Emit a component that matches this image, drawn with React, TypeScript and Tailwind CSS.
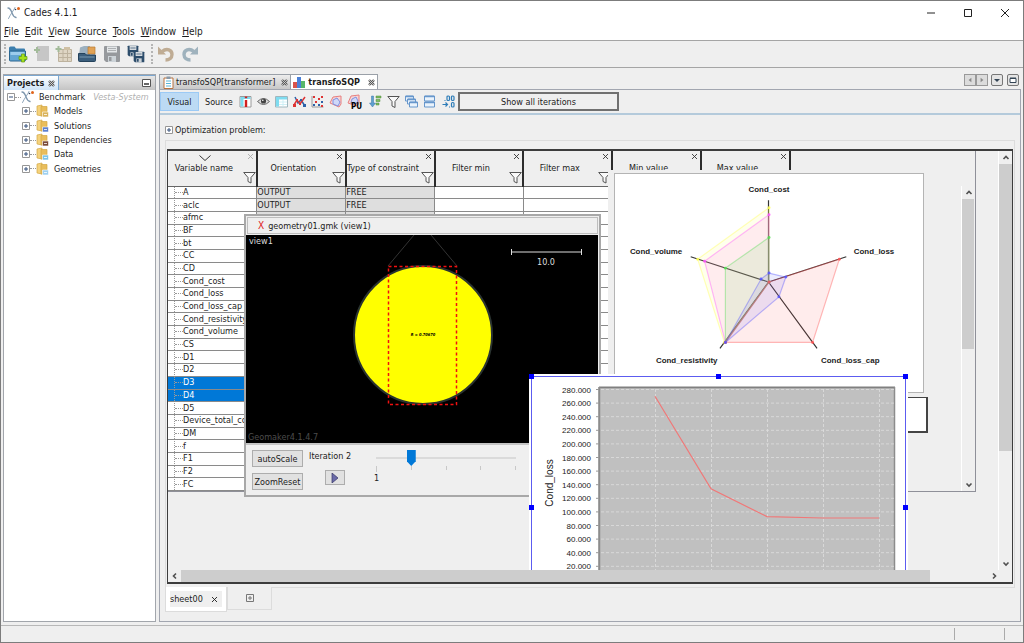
import { ReactNode } from "react";
import clsx from "clsx";

const menus = ["File", "Edit", "View", "Source", "Tools", "Window", "Help"];

const columns = [
  "Variable name",
  "Orientation",
  "Type of constraint",
  "Filter min",
  "Filter max",
  "Min value",
  "Max value",
];

const variables = [
  { name: "A", orientation: "OUTPUT", constraint: "FREE" },
  { name: "aclc", orientation: "OUTPUT", constraint: "FREE" },
  { name: "afmc" },
  { name: "BF" },
  { name: "bt" },
  { name: "CC" },
  { name: "CD" },
  { name: "Cond_cost" },
  { name: "Cond_loss" },
  { name: "Cond_loss_cap" },
  { name: "Cond_resistivity" },
  { name: "Cond_volume" },
  { name: "CS" },
  { name: "D1" },
  { name: "D2" },
  { name: "D3" },
  { name: "D4" },
  { name: "D5" },
  { name: "Device_total_cost" },
  { name: "DM" },
  { name: "f" },
  { name: "F1" },
  { name: "F2" },
  { name: "FC" },
];
const selected = ["D3", "D4"];

const folders = [
  { name: "Models", badge: "#d9b25a" },
  { name: "Solutions", badge: "#5b7fd0" },
  { name: "Dependencies", badge: "#7a4a3a" },
  { name: "Data", badge: "#7cc4e8" },
  { name: "Geometries", badge: "#9fd0f0" },
];

/* ---------- Icons ---------- */

const LogoIcon = () => (
  <svg width="14" height="14" viewBox="0 0 14 14" fill="none" strokeLinecap="round">
    <path d="M1 2c2 0 3 2 4 5s2 4 4 4.500" stroke="#7d96ad" strokeWidth="1.300" />
    <path d="M8 1.500C7 4 3 9 1.500 12.500" stroke="#8fa6ba" />
    <circle cx="11.500" cy="2.500" r="1.500" fill="#e0641c" />
    <circle cx="8.500" cy="3.500" r="0.800" fill="#2d3c52" />
  </svg>
);

const OpenProjectIcon = () => (
  <svg width="20" height="18" viewBox="0 0 20 18">
    <path d="M1 3q0-1.500 1.500-1.500h4L8 3.500h8q1 0 1 1V15H1z" fill="#3d7fae" />
    <path d="M1.500 6h16v9q0 1-1 1h-14q-1 0-1-1z" fill="#63a5d2" stroke="#2c6790" />
    <path d="M2.500 7h14v3h-14z" fill="#9cccec" />
    <path d="M13.500 9h3v2.500H19v3h-2.500V17h-3v-2.500H11v-3h2.500z" fill="#a5e01c" stroke="#5f9a10" strokeWidth="0.700" />
  </svg>
);

const NewFileIcon = () => (
  <svg width="18" height="18" viewBox="0 0 18 18">
    <path d="M4 1h12v15H4z" fill="#c6c6c6" />
    <path d="M3 2h2v2h2v2H5v2H3V6H1V4h2z" fill="#a3bb9a" />
  </svg>
);

const NewTableIcon = () => (
  <svg width="18" height="18" viewBox="0 0 18 18">
    <path d="M3.500 4.500h13v12h-13zM3.500 8.500h13M3.500 12.500h13M8 4.500v12M12.500 4.500v12" fill="#ded5c4" stroke="#bdb29e" />
    <path d="M9 2h6v3H9z" fill="#cfc0a4" />
    <path d="M2.500 1h2v2h2v2h-2v2h-2V5h-2V3h2z" fill="#a3bb9a" />
  </svg>
);

const OpenFileIcon = () => (
  <svg width="20" height="18" viewBox="0 0 20 18">
    <path d="M3 2.500L7 1h6v9H2z" fill="#9db1c0" />
    <path d="M11 2h7v7h-7z" fill="#e2a356" stroke="#b87b33" strokeWidth="0.700" />
    <path d="M1.500 8.500H8L9.500 10h9v5.500q0 1-1 1h-15q-1 0-1-1z" fill="#3b5e7c" stroke="#25435c" />
    <path d="M2.500 12h15" stroke="#7898b0" />
  </svg>
);

const SaveIcon = ({ color, size = 18 }: { color: string; size?: number }) => (
  <svg width={size} height={size} viewBox="0 0 18 18">
    <path d="M1 2q0-1 1-1h14q1 0 1 1v14q0 1-1 1H3l-2-2z" fill={color} />
    <path d="M4 1.500h10v6H4z" fill="#e3e6e8" />
    <path d="M5 3.500h8M5 5.500h8" stroke={color} strokeWidth="0.700" />
    <path d="M5 11h8v6H5z" fill="#ccd3d8" />
    <path d="M6 12h2.500v4H6z" fill={color} />
  </svg>
);

const UndoIcon = ({ color, flip }: { color: string; flip?: boolean }) => (
  <svg width="18" height="18" viewBox="0 0 18 18" className={flip ? "-scale-x-100" : ""}>
    <path d="M5 6.500C10 2.500 15 5 15 9.500c0 3.500-3 5.500-6.500 5.500" fill="none" stroke={color} strokeWidth="3.400" />
    <path d="M1 1.500v8h8z" fill={color} />
  </svg>
);

const CloseMark = ({ className }: { className?: string }) => (
  <svg width="7" height="7" viewBox="0 0 7 7" className={className}>
    <path d="M1 1l5 5M6 1L1 6" stroke="currentColor" strokeWidth="0.900" fill="none" />
  </svg>
);

const TabClose = () => (
  <svg width="7" height="7" viewBox="0 0 7 7">
    <path d="M1 1l5 5M6 1L1 6" stroke="#555" strokeWidth="2.400" />
    <path d="M1 1l5 5M6 1L1 6" stroke="#ddd" strokeWidth="0.800" />
  </svg>
);

const Funnel = () => (
  <svg width="13" height="13" viewBox="0 0 13 13" fill="#fafafa" stroke="#555">
    <path d="M.7 1.500h11.600L8 6.500v5.500l-3-1.500v-4z" />
  </svg>
);

const Expander = ({ open }: { open?: boolean }) => (
  <svg width="8" height="8" viewBox="0 0 8 8" className="shrink-0">
    <path d="M.5.5h7v7h-7z" fill="#fff" stroke="#969696" />
    <path d={open ? "M2 4h4" : "M2 4h4M4 2v4"} stroke="#35507c" />
  </svg>
);

const FolderIcon = ({ badge }: { badge: string }) => (
  <svg width="14" height="14" viewBox="0 0 14 14" className="shrink-0">
    <path d="M1 2l5-1v11l-5-1z" fill="#f4d27c" stroke="#d3a643" strokeWidth="0.700" />
    <path d="M5 2.500h6V12H5z" fill="#e9bd5b" stroke="#d3a643" strokeWidth="0.700" />
    <path d="M6.500 8h6v5h-6z" fill={badge} stroke="#fff" strokeWidth="0.600" />
    <path d="M8 10.500h3" stroke="#fff" strokeWidth="0.800" />
  </svg>
);

const ClipboardIcon = () => (
  <svg width="11" height="13" viewBox="0 0 11 13">
    <path d="M1 2h9v10.500H1z" fill="#fff" stroke="#b87340" />
    <path d="M3.500.5h4v2.500h-4z" fill="#8899a8" />
    <path d="M3 5h5M3 7.500h5M3 10h5" stroke="#58b5d8" />
  </svg>
);

const BarsIcon = () => (
  <svg width="14" height="12" viewBox="0 0 14 12">
    <path d="M1 6h4v6H1z" fill="#d9534b" />
    <path d="M5 1h4v11H5z" fill="#4a80d8" />
    <path d="M9 5h4v7H9z" fill="#58b66a" />
  </svg>
);

const viewTools: { label: string; wide?: boolean; icon: ReactNode }[] = [
  {
    label: "Column info",
    icon: (
      <>
        <path d="M1 1.500h11v10.500H1z" fill="#fff" stroke="#9a9a9a" />
        <path d="M1.500 2h10v2h-10zM1.500 2h3v9.500h-3z" fill="#7fdcf0" />
        <path d="M7 1.500v1.800M7 5v7" stroke="#d02020" strokeWidth="2.400" />
      </>
    ),
  },
  {
    label: "Show",
    icon: (
      <>
        <path d="M.5 6.500Q6.500.5 12.500 6.500Q6.500 12.500.5 6.500z" fill="#ddd" stroke="#666" />
        <circle cx="6.500" cy="6" r="2.600" fill="#444" />
        <circle cx="5.800" cy="5.300" r="0.800" fill="#fff" />
      </>
    ),
  },
  {
    label: "Table",
    icon: (
      <>
        <path d="M.5 1.500h12v10.500H.5z" fill="#fff" stroke="#9fb6bd" />
        <path d="M1 2h11v2.500H1zM1 2h3v9.500H1z" fill="#7fdcf0" />
        <path d="M4 7h8M4 9.500h8M8 4.500v7" stroke="#c5ecf4" strokeWidth="0.800" />
      </>
    ),
  },
  {
    label: "Curve",
    icon: (
      <>
        <path d="M2 2l3 6 3-3 4 6" stroke="#2d62a8" strokeWidth="1.500" fill="none" />
        <path d="M1 10l3-5 3 4 5-7" stroke="#d33" strokeWidth="1.500" fill="none" />
        <path d="M0 9h3v3H0zM3 4h2v2H3zM6 8h2v2H6z" fill="#d33" />
        <path d="M10 9h3v3h-3zM7 4h2v2H7z" fill="#2d62a8" />
      </>
    ),
  },
  {
    label: "Scatter",
    icon: (
      <>
        <path d="M1 1v11h11.500" stroke="#9a9a9a" fill="none" />
        <path d="M2 1h2v2H2zM7 3h2v2H7zM4 6h2v2H4zM10 1h2v2h-2z" fill="#d33" />
        <path d="M10 6h2v2h-2zM2 9h2v2H2zM7 9h2v2H7z" fill="#2d62a8" />
        <path d="M10 10h2v2h-2z" fill="#d33" />
      </>
    ),
  },
  {
    label: "Radar",
    icon: (
      <>
        <path d="M4 2l8-1v8l-2 3-9-4z" fill="#f8d6d6" stroke="#e77f7f" />
        <path d="M4 5l4-2 3 4-2 4-5-2z" fill="#cfd8f8" stroke="#8090e0" />
      </>
    ),
  },
  {
    label: "Radar per unit",
    wide: true,
    icon: (
      <>
        <path d="M2 1l8-1v8l-2 3-9-3z" fill="#f8d6d6" stroke="#e77f7f" />
        <path d="M3 4l4-2 2 4-2 3-5-1z" fill="#cfd8f8" stroke="#8090e0" />
        <text x="2" y="14" fontSize="8" fontWeight="700" fill="#000">PU</text>
      </>
    ),
  },
  {
    label: "Sort",
    icon: (
      <>
        <path d="M2.500 1h2v7h2l-3 4-3-4h2z" fill="#5e9fd0" stroke="#3a77a8" strokeWidth="0.500" />
        <path d="M7 1h5v2H7zM7 4.500h4v2H7zM7 8h3v2H7z" fill="#7dbd62" stroke="#4d8a38" strokeWidth="0.500" />
      </>
    ),
  },
  {
    label: "Filter",
    icon: <path d="M.8 1.500h11.400L8 6.500v6l-3-1.500V6.500z" fill="#fafafa" stroke="#555" />,
  },
  {
    label: "Cascade windows",
    icon: (
      <g fill="#eaf3fc" stroke="#6797cc">
        <path d="M.5 1h8v5h-8z" />
        <path d="M2.500 4h8v5h-8z" />
        <path d="M4.500 7h8v5h-8z" />
        <path d="M1 1.500h7M3 4.500h7M5 7.500h7" strokeWidth="1.600" />
      </g>
    ),
  },
  {
    label: "Tile windows",
    icon: (
      <g fill="#eaf3fc" stroke="#6797cc">
        <path d="M1.500 1h10v5h-10zM1.500 7h10v5h-10z" />
        <path d="M2 1.500h9M2 7.500h9" strokeWidth="1.600" />
      </g>
    ),
  },
  {
    label: "Decimals",
    icon: (
      <g stroke="#2f7db8" strokeWidth="1.200" fill="none">
        <rect x="5" y="1" width="2.500" height="4.500" rx="1" />
        <rect x="9.500" y="1" width="2.500" height="4.500" rx="1" />
        <rect x="9.500" y="7.500" width="2.500" height="4.500" rx="1" />
        <path d="M.5 9.500h5M3.500 7.500l2 2-2 2M7 12h1M2.500 5.500h1" />
      </g>
    ),
  },
];

/* ---------- Scroll bars ---------- */

const arrows = {
  up: "M1.500 5L4 2.500 6.500 5",
  down: "M1.500 2.500L4 5l2.500-2.500",
  left: "M5 1.500L2.500 4 5 6.500",
  right: "M3 1.500L5.500 4 3 6.500",
};

const ArrowButton = ({ dir }: { dir: keyof typeof arrows }) => (
  <button aria-label={`Scroll ${dir}`} className="flex h-[13px] w-[13px] shrink-0 items-center justify-center">
    <svg width="8" height="8" viewBox="0 0 8 8">
      <path d={arrows[dir]} fill="none" stroke="#505050" strokeWidth="1.600" />
    </svg>
  </button>
);

/* ---------- Projects panel ---------- */

const ProjectsPanel = () => (
  <aside className="flex w-[153px] shrink-0 flex-col border border-[#a2a6ac] bg-white">
    <div className="flex h-[15px] items-stretch justify-between border-t border-[#7ba7d0] bg-gradient-to-b from-[#e6e6e6] to-[#c4c4c4]">
      <div className="flex items-center gap-1 border-r border-[#7ba7d0] bg-gradient-to-b from-white to-[#cfe4f8] px-[3px] font-bold">
        Projects
        <button aria-label="Close projects"><TabClose /></button>
      </div>
      <button aria-label="Minimize panel" className="mr-1 self-center">
        <svg width="9" height="8" viewBox="0 0 9 8">
          <path d="M.5.5h8v7h-8z" fill="#fff" stroke="#555" />
          <path d="M2 5h5" stroke="#333" strokeWidth="1.500" />
        </svg>
      </button>
    </div>
    <ul className="grid h-[86px] grid-rows-6 pl-[3px]">
      <li className="flex items-center">
        <Expander open />
        <span className="w-1.5 border-t border-dotted border-[#999]" />
        <LogoIcon />
        <span className="ml-1">Benchmark</span>
        <i className="ml-2 text-[#b0b0b0]">Vesta-System</i>
      </li>
      {folders.map((folder) => (
        <li key={folder.name} className="flex items-center pl-[15px]">
          <Expander />
          <span className="w-1.5 border-t border-dotted border-[#999]" />
          <FolderIcon badge={folder.badge} />
          <span className="ml-1">{folder.name}</span>
        </li>
      ))}
    </ul>
  </aside>
);

/* ---------- Variable table ---------- */

const VariableTable = () => (
  <div className="flex h-[341px] w-[808px] border-r border-b border-[#8f9099]">
    <div className="flex-1 overflow-hidden">
      <table className="h-full w-[623px] table-fixed border-collapse text-left">
        <thead>
          <tr className="h-[35px]">
            {columns.map((column, i) => (
              <th
                key={column}
                className="relative border-r-2 border-b border-[#2c2c2c] border-b-[#666] p-0 text-center font-normal whitespace-nowrap"
              >
                {i === 0 && (
                  <svg width="12" height="6" viewBox="0 0 12 6" className="absolute top-1 left-[31px]">
                    <path d="M.5.5L6 5.500 11.500.5" fill="none" stroke="#333" />
                  </svg>
                )}
                <div className="pr-4">{column}</div>
                <CloseMark className={clsx("absolute top-0.5 right-0.5", i === 0 ? "text-[#aaa]" : "text-[#333]")} />
                <span className="absolute right-0 bottom-0.5"><Funnel /></span>
              </th>
            ))}
          </tr>
        </thead>
        <tbody>
          {variables.map(({ name, orientation, constraint }) => {
            const active = selected.includes(name);
            return (
              <tr key={name} className={clsx("leading-[11px]", active ? "bg-[#0078d7] text-white" : "bg-white")}>
                <td className="border-r border-b border-[#8a8a8a] p-0 pl-1.5">
                  <div className="flex w-[70px] items-center overflow-hidden whitespace-nowrap">
                    <span className="h-[11px] border-l border-dotted border-[#999]" />
                    <span className="w-2 shrink-0 border-t border-dotted border-[#999]" />
                    {name}
                  </div>
                </td>
                <td className={clsx("border-r border-b border-[#8a8a8a] p-0", !active && "bg-[#dedede]")}>{orientation}</td>
                <td className={clsx("border-r border-b border-[#8a8a8a] p-0", !active && "bg-[#dedede]")}>{constraint}</td>
                <td className="border-r border-b border-[#8a8a8a] p-0" />
                <td className="border-r border-b border-[#8a8a8a] p-0" />
                <td className="border-r border-b border-[#8a8a8a] p-0" />
                <td className="border-r border-b border-[#8a8a8a] p-0" />
              </tr>
            );
          })}
        </tbody>
      </table>
    </div>
    <div className="mt-[35px] flex w-[14px] flex-col border-l border-white">
      <ArrowButton dir="up" />
      <div className="h-[150px] w-3 bg-[#cdcdcd]" />
      <div className="flex-1" />
      <ArrowButton dir="down" />
    </div>
  </div>
);

/* ---------- Desktop windows ---------- */

const series = [
  { color: "#ffff55", points: [[160, 37], [88, 89], [115, 173], [160, 112]] },
  { color: "#ff55ff", points: [[160, 44], [95, 91], [116, 173], [160, 112]] },
  { color: "#55dd55", points: [[160, 67], [116, 98], [116, 173], [160, 112]] },
  { color: "#ff5555", points: [[160, 112], [231, 89], [204, 173], [116, 173]] },
  { color: "#5555ff", points: [[160, 103], [177, 107], [170, 127], [116, 173], [152, 109]] },
];

const RadarWindow = () => (
  <section className="absolute top-[19px] left-[440px] bg-[#efefef] pt-[3px] pr-1 pl-1.5">
    <svg width="310" height="220" viewBox="0 0 310 220" className="border border-[#b4b4b4] bg-white">
      <g transform="translate(-5 -3)">
        <path
          d="M159.500 29.500v82.500L238 86.500M159.500 112l49 67M159.500 112l-49 67M159.500 112L81 86.500"
          fill="none"
          stroke="#333"
          strokeWidth="1.200"
        />
        {series.map((s) => (
          <g key={s.color}>
            <polygon
              points={s.points.map((p) => p.join()).join(" ")}
              fill={s.color}
              fillOpacity="0.110"
              stroke={s.color}
              strokeOpacity="0.400"
              strokeWidth="1.200"
            />
            {s.points.map(([x, y]) => (
              <circle key={`${x}-${y}`} cx={x} cy={y} r="1.500" fill={s.color} fillOpacity="0.850" />
            ))}
          </g>
        ))}
        <g fontSize="8" fontWeight="700" textAnchor="middle" fill="#222" className="font-['Liberation_Sans',sans-serif]">
          <text x="160" y="21">Cond_cost</text>
          <text x="266" y="84">Cond_loss</text>
          <text x="46" y="84">Cond_volume</text>
          <text x="77" y="194">Cond_resistivity</text>
          <text x="242" y="194">Cond_loss_cap</text>
        </g>
      </g>
    </svg>
  </section>
);

const GeometryWindow = () => (
  <section className="absolute top-[63px] left-[76px] w-[357px] border-2 border-[#a8a8a8] bg-[#efefef]">
    <header className="m-px flex h-[17px] items-center gap-1 border border-[#bdbdbd] pl-2.5">
      <span className="text-[10px] leading-3 text-[#e02020]">X</span>
      geometry01.gmk (view1)
    </header>
    <svg width="352" height="208" viewBox="0 0 352 208" className="bg-black">
      <g fill="#ddd" fontSize="9">
        <text x="3" y="9">view1</text>
        <text x="300" y="30" textAnchor="middle">10.0</text>
        <text x="2" y="205" fill="#4c4c4c">Geomaker4.1.4.7</text>
      </g>
      <path d="M265.500 14v6M335.500 14v6M265.500 17h70" stroke="#ddd" fill="none" />
      <path d="M142 31L168 0M211 31L185 0" stroke="#333" />
      <circle cx="177" cy="100" r="69" fill="#ff0" stroke="#2a3330" strokeWidth="2" />
      <path d="M142.500 31.500h68v138h-68z" fill="none" stroke="#f01010" strokeWidth="1.500" strokeDasharray="3 2.500" />
      <text x="177" y="101" fontSize="4" fontWeight="700" fontStyle="italic" textAnchor="middle">R = 0.70670</text>
    </svg>
    <div className="flex h-[52px] items-start border-t-2 border-[#c4c4c4] px-1.5 pt-[5px]">
      <div className="flex flex-col gap-1.5">
        <button className="h-[17px] w-[51px] border border-[#adadad] bg-[#e1e1e1]">autoScale</button>
        <button className="h-[17px] w-[51px] border border-[#adadad] bg-[#e1e1e1]">ZoomReset</button>
      </div>
      <div className="ml-1.5 flex w-[63px] flex-col gap-2">
        <label htmlFor="iteration" className="leading-3">Iteration 2</label>
        <button aria-label="Play" className="ml-4 flex h-[15px] w-5 items-center justify-center border border-[#adadad] bg-[#e1e1e1]">
          <svg width="8" height="10" viewBox="0 0 8 10">
            <path d="M1 0l6 5-6 5z" fill="#6a6aa8" stroke="#333366" strokeWidth="0.700" />
          </svg>
        </button>
      </div>
      <div className="w-[148px]">
        <input
          id="iteration"
          type="range"
          min={1}
          max={5}
          defaultValue={2}
          className="block h-4 w-full appearance-none bg-[linear-gradient(#dadada,#dadada)] bg-[length:140px_2px] bg-center bg-no-repeat [&::-webkit-slider-thumb]:h-4 [&::-webkit-slider-thumb]:w-[9px] [&::-webkit-slider-thumb]:appearance-none [&::-webkit-slider-thumb]:bg-[#0078d7] [&::-webkit-slider-thumb]:[clip-path:polygon(0_0,100%_0,100%_70%,50%_100%,0_70%)]"
        />
        <div className="flex h-1.5 justify-between px-1">
          {[1, 2, 3, 4, 5].map((n) => (
            <span key={n} className="h-1 w-px bg-[#c8c8c8] first:h-1.5" />
          ))}
        </div>
        <div className="pl-0.5 leading-3">1</div>
      </div>
    </div>
  </section>
);

const ticks = [280, 260, 240, 220, 200, 180, 160, 140, 120, 100, 80, 60, 40, 20];
const tickY = (value: number) => 15.5 + (280 - value) * 0.68;
const curve = [[126, 270], [182, 134], [238, 93], [294, 91], [350, 91]];

const Handle = ({ className }: { className: string }) => (
  <span className={clsx("absolute h-[5px] w-[5px] bg-[#0000ff]", className)} />
);

const ChartWindow = () => (
  <section className="absolute top-[223px] left-[361px] h-[268px] w-[379px] bg-white p-0.5">
    <div className="h-full border border-[#5c5cf0]">
      <svg width="372" height="262" viewBox="3 3 372 262">
        <path d="M69.500 13v240" stroke="#aaa" />
        <path d="M71 14.500h294v230H71z" fill="#c0c0c0" />
        <path d="M70 13.500h296" stroke="#808080" strokeWidth="2" />
        <path d="M70.500 13v232M365.500 13v232" stroke="#8c8c8c" strokeWidth="1.500" />
        {ticks.map((value) => (
          <g key={value}>
            <path d={`M72 ${tickY(value)}h293`} stroke="#dedede" strokeWidth="0.800" strokeDasharray="3 2" />
            <path d={`M67 ${tickY(value)}h3`} stroke="#999" />
            <text x="62" y={tickY(value) + 3} fontSize="8" textAnchor="end" fill="#222" className="font-['Liberation_Sans',sans-serif]">
              {value.toFixed(3)}
            </text>
          </g>
        ))}
        {curve.map(([x]) => (
          <path key={x} d={`M${x + 0.5} 15v230`} stroke="#dedede" strokeWidth="0.800" strokeDasharray="3 2" />
        ))}
        <polyline points={curve.map(([x, v]) => `${x},${tickY(v)}`).join(" ")} fill="none" stroke="#f07878" strokeWidth="1.200" />
        <text transform="translate(24 109) rotate(-90)" fontSize="10" textAnchor="middle" fill="#222" className="font-['Liberation_Sans',sans-serif]">
          Cond_loss
        </text>
      </svg>
    </div>
    <Handle className="top-0 left-0" />
    <Handle className="top-0 left-[187px]" />
    <Handle className="top-0 right-0" />
    <Handle className="top-[131px] left-0" />
    <Handle className="top-[131px] right-0" />
  </section>
);

/* ---------- Sheet with desktop ---------- */

const Desktop = () => (
  <div className="flex flex-1 flex-col border-x border-y-2 border-[#3c3c3c]">
    <div className="flex flex-1">
      <div className="relative min-w-0 flex-1 overflow-hidden">
        <VariableTable />
        <RadarWindow />
        <div className="absolute top-[246px] left-[560px] h-9 w-[200px] border-2 border-t border-[#444] bg-white" />
        <GeometryWindow />
        <ChartWindow />
      </div>
      <div className="flex w-[14px] flex-col border-l border-white">
        <ArrowButton dir="up" />
        <div className="h-[287px] bg-[#cdcdcd]" />
        <div className="flex-1" />
        <ArrowButton dir="down" />
      </div>
    </div>
    <div className="flex h-3 items-center pr-3">
      <ArrowButton dir="left" />
      <div className="h-full w-9/10 bg-[#cdcdcd]" />
      <div className="flex-1" />
      <ArrowButton dir="right" />
    </div>
  </div>
);

const EditorPanel = () => (
  <main className="flex min-w-0 flex-1 flex-col">
    <div className="flex h-[15px] items-stretch">
      <div className="flex items-center gap-0.5 border border-b-0 border-[#9aa0a8] bg-gradient-to-b from-[#ededed] to-[#c8c8c8] pr-0.5 pl-[3px]">
        <ClipboardIcon />
        <span>transfoSQP[transformer]</span>
        <button aria-label="Close transformer tab" className="ml-1"><TabClose /></button>
      </div>
      <div className="flex items-center gap-0.5 border border-b-0 border-l-0 border-[#9aa0a8] bg-white pr-0.5 pl-px font-bold">
        <BarsIcon />
        <span>transfoSQP</span>
        <button aria-label="Close transfoSQP tab" className="ml-1.5"><TabClose /></button>
      </div>
      <div className="flex-1" />
      <div className="mr-0.5 flex gap-[3px]">
        <div className="flex">
          {["M7 3v5L4 5.500z", "M4 3v5l3-2.500z"].map((d, i) => (
            <button key={d} aria-label={i ? "Next tab" : "Previous tab"} className="h-3 w-3 border border-[#999] bg-[#dcdcdc]">
              <svg width="10" height="10" viewBox="0 0 11 11"><path d={d} fill="#888" /></svg>
            </button>
          ))}
        </div>
        <button aria-label="Tab list" className="h-3 w-3 rounded-xs border border-[#777] bg-[#e4e4e4]">
          <svg width="10" height="10" viewBox="0 0 10 10"><path d="M2 4h6L5 7z" fill="#345" /></svg>
        </button>
        <button aria-label="Maximize panel" className="ml-px h-3 w-3 rounded-xs border border-[#777] bg-[#e4e4e4]">
          <svg width="10" height="10" viewBox="0 0 10 10"><path d="M2 3.500h6v4H2zM2 3h6" fill="#fff" stroke="#345" /></svg>
        </button>
      </div>
    </div>

    <div className="flex flex-1 flex-col border border-[#a2a6b0]">
      <div className="flex h-[25px] items-center border-b-2 border-[#b4cadb]">
        <button className="h-[19px] w-[39px] border border-[#9ccaf5] bg-[#bcdaf4]">Visual</button>
        <button className="ml-1.5 w-[27px]">Source</button>
        <div className="ml-1 flex">
          {viewTools.map(({ label, wide, icon }) => (
            <button
              key={label}
              aria-label={label}
              className={clsx("flex shrink-0 justify-center last:w-5", wide ? "w-[22px]" : "w-[18px]")}
            >
              <svg width="13" height="13" viewBox="0 0 13 13" fill="none" className="overflow-visible">{icon}</svg>
            </button>
          ))}
        </div>
        <button className="h-[19px] w-[161px] border-2 border-[#707070]">Show all iterations</button>
      </div>

      <div className="flex flex-1 flex-col px-[5px]">
        <div className="flex h-[25px] items-center gap-0.5 pt-1">
          <Expander />
          Optimization problem:
        </div>
        <div className="flex flex-1 flex-col border border-b-0 border-[#dcdcdc] px-px pt-2 pb-[3px]">
          <Desktop />
        </div>
        <div className="flex h-[34px] items-start">
          <div className="flex h-[25px] w-[62px] items-center border border-t-0 border-[#dcdcdc] bg-white px-1">
            <span className="flex w-full items-center justify-between bg-[#efefef] leading-4">
              sheet00
              <button aria-label="Close sheet00" className="mr-1"><CloseMark /></button>
            </span>
          </div>
          <button aria-label="Add sheet" className="flex h-[23px] w-[45px] items-center justify-center border border-t-0 border-[#dcdcdc]">
            <svg width="8" height="8" viewBox="0 0 8 8">
              <path d="M.5.5h7v7h-7zM2 4h4M4 2v4" fill="none" stroke="#777" />
            </svg>
          </button>
          <div className="flex-1 border-t border-[#dcdcdc]" />
        </div>
      </div>
    </div>
  </main>
);

export default function App() {
  return (
    <div className="flex min-h-screen w-full flex-col border border-[#7c7c7c] bg-[#efefef] font-['DejaVu_Sans_Condensed','DejaVu_Sans',sans-serif] text-[9px] leading-3 text-[#1c1c1c]">
      <header className="bg-white text-[10px]">
        <div className="flex h-[23px] items-center pl-1.5">
          <LogoIcon />
          <h1 className="ml-[3px] flex-1">Cades 4.1.1</h1>
          {["M1 5h8", "M1.500 1.500h7v7h-7z", "M1 1l8 8M9 1L1 9"].map((d, i) => (
            <button key={d} aria-label={["Minimize", "Maximize", "Close"][i]} className="flex w-[37px] justify-center">
              <svg width="10" height="10" viewBox="0 0 10 10"><path d={d} fill="none" stroke="#222" /></svg>
            </button>
          ))}
        </div>
        <nav className="flex h-[17px] items-center gap-1.5 border-b border-[#a5a5a5] pl-[3px]">
          {menus.map((menu) => (
            <button key={menu}><u>{menu[0]}</u>{menu.slice(1)}</button>
          ))}
        </nav>
      </header>

      <div className="flex h-[27px] items-center gap-1 border-b border-[#a5a5a5] pl-[3px]">
        <span className="-mr-0.5 h-5 border-l-2 border-dotted border-[#b5b5b5]" />
        <button aria-label="Open project" className="mr-px"><OpenProjectIcon /></button>
        <button aria-label="New file"><NewFileIcon /></button>
        <button aria-label="New table"><NewTableIcon /></button>
        <button aria-label="Open file" className="mr-0.5"><OpenFileIcon /></button>
        <button aria-label="Save" className="mr-0.5"><SaveIcon color="#96999d" /></button>
        <button aria-label="Save all" className="grid">
          <span className="col-start-1 row-start-1 pr-1.5 pb-1.5"><SaveIcon color="#2d4d6b" size={12} /></span>
          <span className="col-start-1 row-start-1 pt-1.5 pl-1.5"><SaveIcon color="#2d4d6b" size={12} /></span>
        </button>
        <span className="ml-0.5 h-5 border-l-2 border-dotted border-[#b5b5b5]" />
        <button aria-label="Undo" className="mr-0.5"><UndoIcon color="#bfac94" /></button>
        <button aria-label="Redo"><UndoIcon color="#9fb2bd" flip /></button>
      </div>

      <div className="flex flex-1 gap-[3px] px-0.5 pt-1.5 pb-[3px]">
        <ProjectsPanel />
        <EditorPanel />
      </div>

      <footer className="flex h-[17px] items-center justify-end border-t border-[#b8b8b8]">
        <span className="h-3 w-[50px] border-l border-[#aaa]" />
        <span className="h-3 w-[19px] border-l border-[#aaa]" />
      </footer>
    </div>
  );
}
